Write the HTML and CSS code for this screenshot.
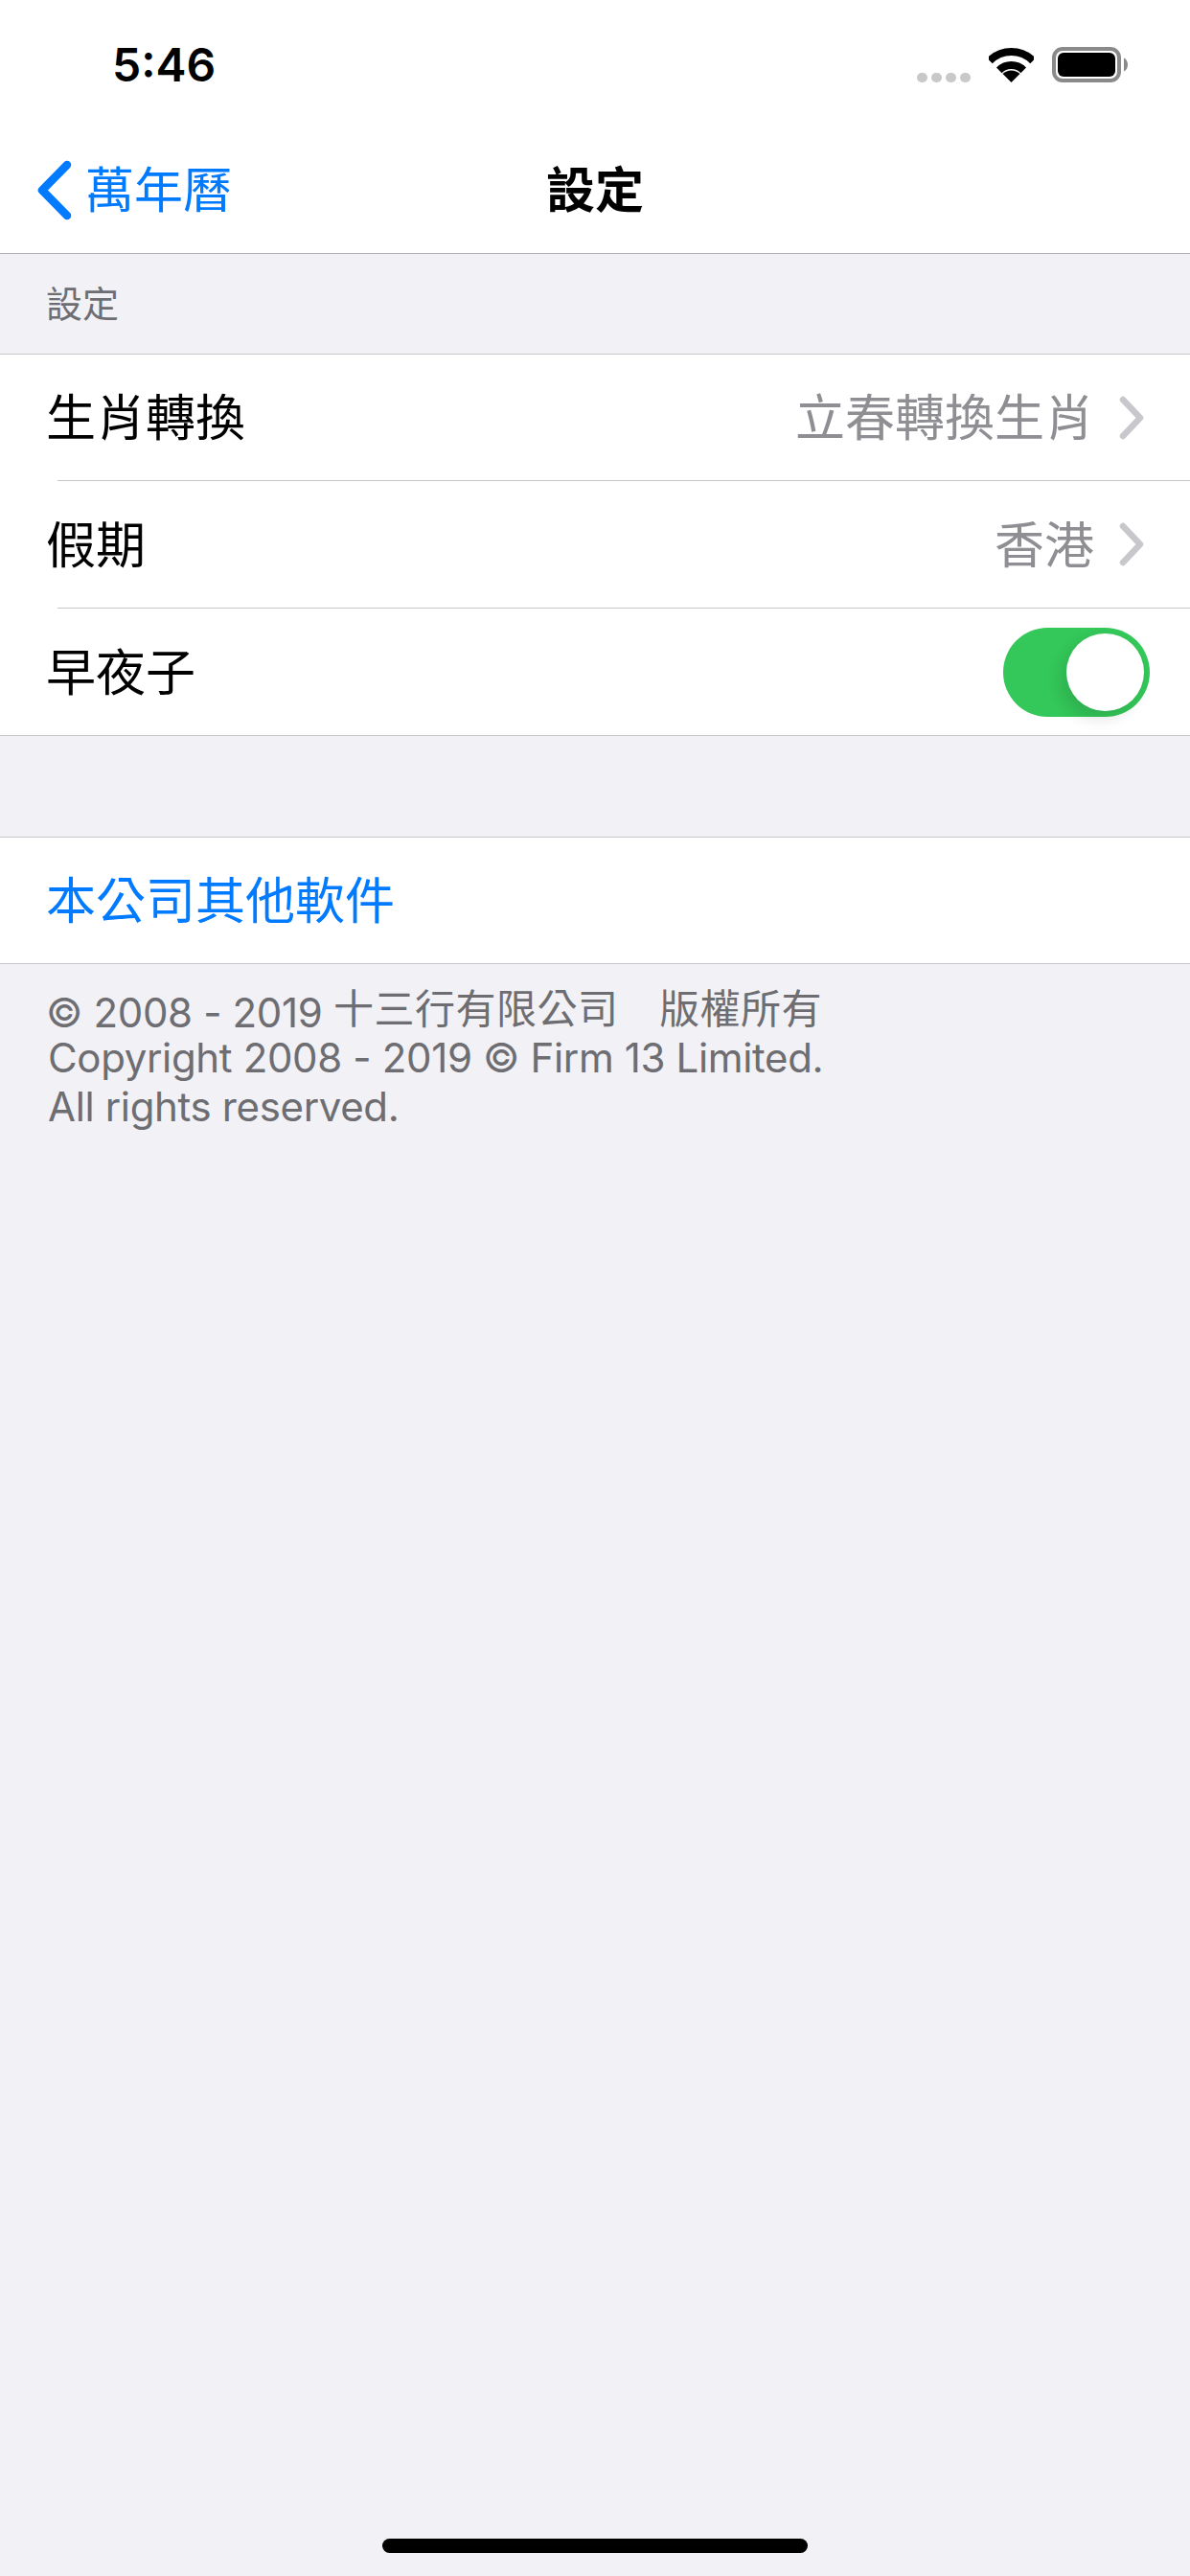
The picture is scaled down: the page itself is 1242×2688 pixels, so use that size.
FILE: index.html
```html
<!DOCTYPE html>
<html lang="zh-Hant">
<head>
<meta charset="utf-8">
<meta name="viewport" content="width=device-width, initial-scale=1">
<title>設定</title>
<link rel="stylesheet" href="styles.css">
</head>
<body>

<div class="page">
  <header class="topbar">
    <div class="statusbar">
      <span class="time">5:46</span>
      <div class="status-icons">
        <div class="signal"><i></i><i></i><i></i><i></i></div>
        <svg class="wifi" width="47" height="36" viewBox="0 0 47 36">
          <path d="M0.9 13.4A32 32 0 0 1 46.1 13.4" fill="none" stroke="#000" stroke-width="8"/>
          <path d="M10.8 23.3A18 18 0 0 1 36.2 23.3" fill="none" stroke="#000" stroke-width="8"/>
          <path d="M23.5 36L14.5 27A13 13 0 0 1 32.5 27Z" fill="#000"/>
        </svg>
        <svg class="battery" width="79" height="37" viewBox="0 0 79 37">
          <rect x="2" y="2" width="68" height="33" rx="9" fill="none" stroke="#8a8a8a" stroke-width="4"/>
          <rect x="6" y="6" width="60" height="25" rx="6" fill="#000"/>
          <path d="M75 11.5C77.500 12.500 79 15.500 79 18.500C79 21.500 77.500 24.500 75 25.500Z" fill="#8a8a8a"/>
        </svg>
      </div>
    </div>
    <nav class="navbar">
      <a class="back" href="#">
        <svg width="37" height="63" viewBox="0 0 37 63">
          <path d="M32 5L6 31.500L32 58" fill="none" stroke="#007aff" stroke-width="8.500" stroke-linecap="round" stroke-linejoin="round"/>
        </svg>
        <span class="nav-text">萬年曆</span>
      </a>
      <h1 class="title nav-text">設定</h1>
    </nav>
  </header>

  <div class="section-head">設定</div>

  <div class="group">
    <div class="row">
      <span class="label">生肖轉換</span>
      <div class="detail">
        <span class="label">立春轉換生肖</span>
        <svg class="chevron" width="26" height="46" viewBox="0 0 26 46">
          <path d="M4 4L22 23L4 42" fill="none" stroke="#c7c7cc" stroke-width="6.500" stroke-linecap="round" stroke-linejoin="round"/>
        </svg>
      </div>
    </div>
    <div class="row">
      <span class="label">假期</span>
      <div class="detail">
        <span class="label">香港</span>
        <svg class="chevron" width="26" height="46" viewBox="0 0 26 46">
          <path d="M4 4L22 23L4 42" fill="none" stroke="#c7c7cc" stroke-width="6.500" stroke-linecap="round" stroke-linejoin="round"/>
        </svg>
      </div>
    </div>
    <div class="row">
      <span class="label">早夜子</span>
      <div class="switch"><div class="knob"></div></div>
    </div>
  </div>

  <div class="group group-links">
    <div class="row link"><span class="label">本公司其他軟件</span></div>
  </div>

  <div class="foot">
    <div class="foot-line"><span class="latin first">© 2008 - 2019 </span><span class="cjk">十三行有限公司　版權所有</span></div>
    <div class="foot-line"><span class="latin">Copyright 2008 - 2019 © Firm 13 Limited.</span></div>
    <div class="foot-line"><span class="latin">All rights reserved.</span></div>
  </div>

  <div class="home-bar"></div>
</div>

</body>
</html>
```

FILE: styles.css
```css
html, body {
    margin: 0;
    padding: 0;
}

body {
    background-color: #f1f1f6;
    font-family: Inter, "Noto Sans CJK TC", sans-serif;
    color: #000;
}

.page {
    display: flex;
    flex-direction: column;
    width: 1242px;
    height: 2688px;
    overflow: hidden;
}

.topbar {
    background-color: #fff;
    border-bottom: 1px solid #b2b2b2;
}

.statusbar {
    display: flex;
    justify-content: space-between;
    align-items: center;
    height: 132px;
    padding: 3px 65px 0 117px;
    box-sizing: border-box;
}

.time {
    font-size: 48px;
    font-weight: 600;
    line-height: 134px;
}

.status-icons {
    display: flex;
    align-items: center;
    gap: 19px;
}

.signal {
    display: flex;
    gap: 4px;
    margin-top: 26px;
}

.signal i {
    display: block;
    width: 11px;
    height: 10px;
    border-radius: 5px;
    background-color: #c8c8c8;
}

.wifi {
    display: block;
}

.battery {
    display: block;
}

.navbar {
    display: grid;
    grid-template-columns: 1fr auto 1fr;
    align-items: center;
    height: 132px;
    padding: 0 38px;
}

.back {
    display: flex;
    align-items: center;
    gap: 14px;
    color: #007aff;
    font-size: 51px;
    text-decoration: none;
}

.back svg {
    display: block;
}

.nav-text {
    margin-bottom: 6px;
}

.title {
    margin-top: 0;
    font-size: 51px;
    font-weight: 700;
}

.section-head {
    padding: 26px 48px;
    font-size: 38px;
    line-height: 52px;
    color: #6d6d72;
}

.group {
    background-color: #fff;
    border-top: 1px solid #c6c6c8;
    border-bottom: 1px solid #c6c6c8;
}

.group-links {
    margin-top: 105px;
}

.row {
    display: flex;
    justify-content: space-between;
    align-items: center;
    height: 131px;
    padding: 0 42px 0 48px;
    font-size: 52px;
    position: relative;
}

/* inset line between rows */
.row + .row {
    height: 132px;
    border-top: 1px solid transparent;
}

.row + .row::before {
    content: "";
    position: absolute;
    left: 60px;
    right: 0;
    top: -1px;
    height: 1px;
    background-color: #c6c6c8;
}

.label {
    margin-bottom: 6px;
}

.detail {
    display: flex;
    align-items: center;
    gap: 26px;
    margin-right: 6px;
    color: #8e8e93;
}

.chevron {
    display: block;
}

.switch {
    display: flex;
    justify-content: flex-end;
    align-items: center;
    width: 153px;
    height: 93px;
    padding: 6px;
    box-sizing: border-box;
    border-radius: 47px;
    background-color: #34c759;
}

.knob {
    width: 81px;
    height: 81px;
    border-radius: 50%;
    background-color: #fff;
    box-shadow: -6px 8px 16px rgba(0, 0, 0, 0.12);
}

.link {
    color: #007aff;
}

.foot {
    padding: 21px 50px 0;
    font-size: 42px;
    color: #6d6d72;
}

.foot-line {
    height: 51px;
    line-height: 51px;
}

.latin {
    letter-spacing: -0.35px;
}

.first {
    margin-left: -2px;
}

/* the CJK run sits a little higher than the latin next to it */
.cjk {
    vertical-align: 4px;
    letter-spacing: 0.5px;
}

.home-bar {
    width: 444px;
    height: 15px;
    margin: auto auto 24px;
    border-radius: 8px;
    background-color: #000;
}
```
